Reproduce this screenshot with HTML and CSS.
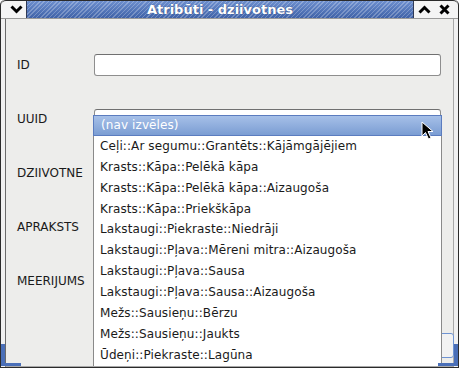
FILE: index.html
```html
<!DOCTYPE html>
<html lang="lv">
<head>
  <meta charset="UTF-8">
  <title>Atribūti - dziivotnes</title>
  <link rel="stylesheet" href="styles.css">
</head>
<body>

<div class="window">
  <div class="titlebar">
    <div class="tb-btn menu-btn">
      <svg width="13" height="9" viewBox="0 0 13 9"><path d="M1.5 1.5 L6.5 6.5 L11.5 1.5" fill="none" stroke="#000" stroke-width="3"/></svg>
    </div>
    <div class="title">Atribūti - dziivotnes</div>
    <div class="tb-btn">
      <svg width="13" height="9" viewBox="0 0 13 9"><path d="M1.5 7.5 L6.5 2.5 L11.5 7.5" fill="none" stroke="#000" stroke-width="3"/></svg>
    </div>
    <div class="tb-btn">
      <svg width="11" height="11" viewBox="0 0 11 11"><path d="M1.5 1.5 L9.5 9.5 M9.5 1.5 L1.5 9.5" fill="none" stroke="#000" stroke-width="3"/></svg>
    </div>
  </div>

  <div class="content">
    <div class="form">
      <div class="row">
        <label>ID</label>
        <input type="text" class="field">
      </div>
      <div class="row">
        <label>UUID</label>
        <div class="field combo"></div>
      </div>
      <div class="row">
        <label>DZIIVOTNE</label>
      </div>
      <div class="row">
        <label>APRAKSTS</label>
      </div>
      <div class="row">
        <label>MEERIJUMS</label>
      </div>
    </div>
    <div class="footer">
      <button class="ok-btn">OK</button>
    </div>

    <ul class="dropdown">
      <li class="selected">(nav izvēles)</li>
      <li>Ceļi::Ar segumu::Grantēts::Kājāmgājējiem</li>
      <li>Krasts::Kāpa::Pelēkā kāpa</li>
      <li>Krasts::Kāpa::Pelēkā kāpa::Aizaugoša</li>
      <li>Krasts::Kāpa::Priekškāpa</li>
      <li>Lakstaugi::Piekraste::Niedrāji</li>
      <li>Lakstaugi::Pļava::Mēreni mitra::Aizaugoša</li>
      <li>Lakstaugi::Pļava::Sausa</li>
      <li>Lakstaugi::Pļava::Sausa::Aizaugoša</li>
      <li>Mežs::Sausieņu::Bērzu</li>
      <li>Mežs::Sausieņu::Jaukts</li>
      <li>Ūdeņi::Piekraste::Lagūna</li>
    </ul>

    <svg class="cursor" width="14" height="20" viewBox="0 0 14 20">
      <path d="M1 1 L1 15 L4.5 11.5 L7.5 18 L10 17 L7 10.5 L12 10.5 Z" fill="#000" stroke="#fff" stroke-width="1"/>
    </svg>
  </div>

  <div class="grip grip-left"></div>
  <div class="grip grip-right"></div>
</div>

</body>
</html>
```

FILE: styles.css
```css
* {
  box-sizing: border-box;
}

body {
  margin: 0;
  font-family: "DejaVu Sans", Verdana, sans-serif;
  font-size: 12px;
  color: #1a1a1a;
  background-color: #fff;
}

.window {
  position: relative;
  width: 459px;
  height: 368px;
  background-color: #f0f0f0;
  border: 1px solid #2b2b2b;
  border-top: none;
  border-radius: 5px 5px 0 0;
  display: flex;
  flex-direction: column;
  overflow: hidden;
}

.titlebar {
  height: 19px;
  display: flex;
  background-color: #f4f4f4;
  border-top: 1px solid #2b2b2b;
  border-bottom: 1px solid #9a9a9a;
  border-radius: 5px 5px 0 0;
  padding-right: 4px;
}

.tb-btn {
  width: 20px;
  display: flex;
  align-items: center;
  justify-content: center;
}

.menu-btn {
  width: 25px;
  padding-left: 6px;
}

.title {
  flex: 1;
  color: #fff;
  font-weight: bold;
  font-size: 13px;
  text-align: center;
  line-height: 17px;
  border-left: 1px solid #303a55;
  border-right: 1px solid #303a55;
  background-color: #5577bb;
  background-image:
    repeating-linear-gradient(135deg, rgba(255,255,255,0.25) 0 1px, transparent 1px 3px),
    linear-gradient(#6d8fce, #3f62a8);
  text-shadow: 0 0 1px #2a3f70;
}

.content {
  position: relative;
  flex: 1;
  margin: 0 4px;
  border-left: 1px solid #6a6a6a;
  border-right: 1px solid #a8a8a8;
  border-bottom: 1px solid #a8a8a8;
  background-color: #ededeb;
  padding: 19px 10px 0 11px;
}

.row {
  height: 54px;
  display: flex;
  align-items: center;
}

.row label {
  width: 77px;
  color: #1a1a1a;
}

.field {
  width: 347px;
  height: 22px;
  border: 1px solid #8e8e8e;
  border-top-color: #707070;
  border-radius: 3px;
  background-color: #fff;
  margin: 0;
  font: inherit;
}

.combo {
  margin-top: 1px;
}

.footer {
  display: flex;
  justify-content: flex-end;
  margin-top: 25px;
  margin-right: -11px;
}

.ok-btn {
  width: 80px;
  height: 25px;
  border: 1px solid #6e93d2;
  border-radius: 3px;
  background-color: #f2f2f2;
  font: inherit;
}

.dropdown {
  position: absolute;
  left: 87px;
  top: 96px;
  width: 349px;
  margin: 0;
  padding: 0;
  list-style: none;
  background-color: #fff;
  border: 1px solid #8a8a8a;
  border-bottom: none;
}

.dropdown li {
  height: 20.9px;
  line-height: 21px;
  padding-left: 6px;
  white-space: nowrap;
  letter-spacing: 0.1px;
}

.dropdown li.selected {
  color: #fff;
  background: linear-gradient(#a6c0e8, #7b9dd3);
  border: 1px solid #5b7cbf;
  margin: -1px -1px 0;
  padding-left: 7px;
  line-height: 19px;
}

.cursor {
  position: absolute;
  left: 415px;
  top: 102px;
}

.grip {
  position: absolute;
  bottom: 1px;
  width: 20px;
  height: 22px;
  border-bottom: 3px solid #4a6fb8;
}

.grip-left {
  left: 0;
  border-left: 4px solid #4a6fb8;
}

.grip-right {
  right: 0;
  border-right: 4px solid #4a6fb8;
}
```
